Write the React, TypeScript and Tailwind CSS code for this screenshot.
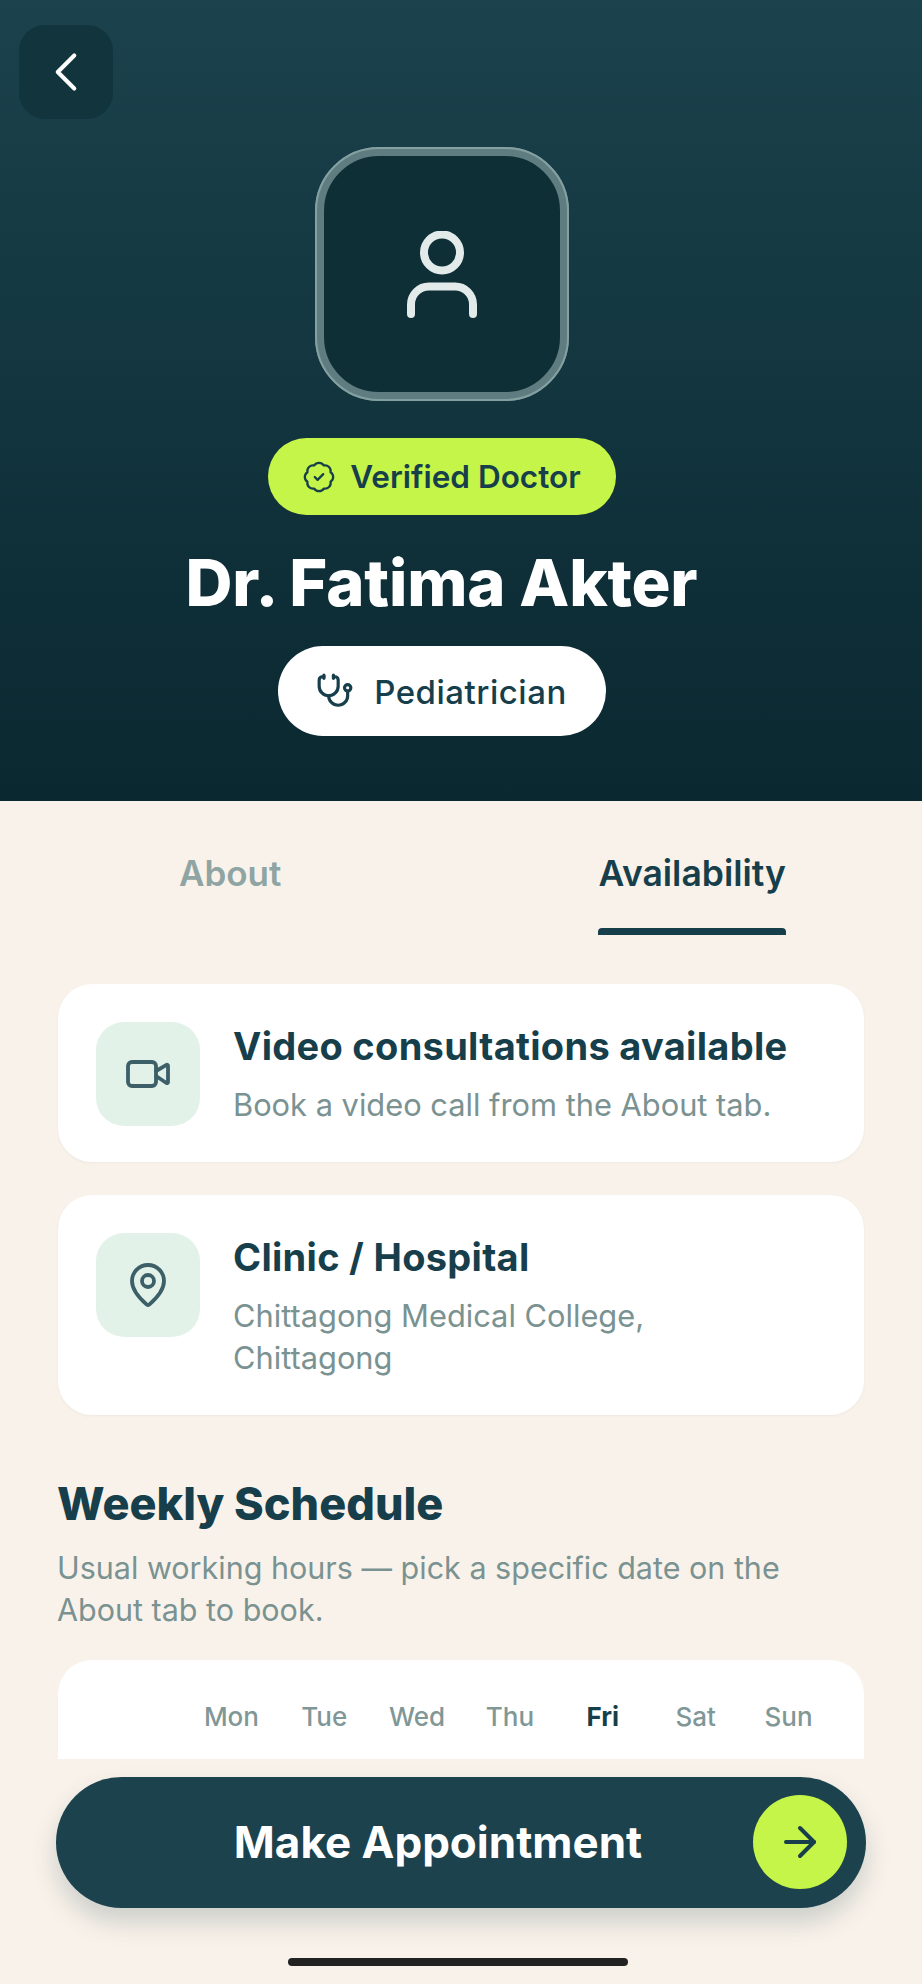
import { ArrowRight, ChevronLeft, MapPin, Stethoscope, Video } from "lucide-react";

const days = ["Mon", "Tue", "Wed", "Thu", "Fri", "Sat", "Sun"];

function VerifiedIcon() {
  return (
    <svg width="34" height="34" viewBox="0 0 24 24" fill="none" stroke="#173f4b" strokeWidth="1.6" strokeLinecap="round" strokeLinejoin="round">
      <path d="M3.85 8.62a4 4 0 0 1 4.78-4.77 4 4 0 0 1 6.74 0 4 4 0 0 1 4.78 4.78 4 4 0 0 1 0 6.74 4 4 0 0 1-4.77 4.78 4 4 0 0 1-6.75 0 4 4 0 0 1-4.78-4.77 4 4 0 0 1 0-6.76Z" />
      <path d="m9 12 2 2 4-4" />
    </svg>
  );
}

function InfoCard({ icon, title, lines }: { icon: React.ReactNode; title: string; lines: string[] }) {
  return (
    <div className="flex min-h-[178px] gap-[33px] rounded-[34px] bg-white px-[38px] pt-[38px] pb-[36px] shadow-[0_1px_3px_rgba(23,63,75,0.05)]">
      <div className="flex h-[104px] w-[104px] shrink-0 items-center justify-center rounded-[28px] bg-[#e2f2e9] text-[#3d5f68]">
        {icon}
      </div>
      <div className="min-w-0">
        <h3 className="text-[38px] leading-[48px] font-bold tracking-[0.3px] whitespace-nowrap text-[#173f4b]">{title}</h3>
        <div className="mt-[14px]">
          {lines.map((line) => (
            <p key={line} className="text-[30.8px] leading-[42px] text-[#7a9291]">
              {line}
            </p>
          ))}
        </div>
      </div>
    </div>
  );
}

export default function App() {
  return (
    <div className="flex h-[1984px] w-[922px] flex-col overflow-hidden bg-[#f9f2ea] font-['Inter',sans-serif]">
      <header className="flex h-[801px] shrink-0 flex-col items-center bg-gradient-to-b from-[#1b424d] to-[#0a2830] pt-[25px] pr-[58px] pl-[19px]">
        <button className="flex h-[94px] w-[94px] items-center justify-center self-start rounded-[26px] bg-[#12343d] text-white">
          <ChevronLeft size={66} strokeWidth={1.5} />
        </button>
        <div className="mt-[28px] flex h-[254px] w-[254px] items-center justify-center rounded-[64px] border-[9px] border-[#5f7d81] bg-[#0f2f37] outline-[2px] -outline-offset-[2px] outline-[#84a0a1]">
          <svg width="70" height="87" viewBox="0 0 70 87" fill="none" stroke="#e3ebea" strokeWidth="8" strokeLinecap="round">
            <circle cx="35" cy="21.5" r="18" />
            <path d="M4 83V73.5a18 18 0 0 1 18-18h26a18 18 0 0 1 18 18V83" />
          </svg>
        </div>
        <div className="mt-[37px] flex h-[77px] w-[348px] items-center justify-center gap-[14px] rounded-full bg-[#c5f549] text-[31.5px] font-semibold text-[#173f4b]">
          <VerifiedIcon />
          <span className="pt-[1px]">Verified Doctor</span>
        </div>
        <h1 className="mt-[30px] text-[65px] leading-[76px] font-extrabold tracking-[-0.2px] whitespace-nowrap text-white">Dr. Fatima Akter</h1>
        <div className="mt-[25px] flex h-[90px] w-[328px] items-center justify-center gap-[20px] rounded-full bg-white text-[33px] font-medium tracking-[0.5px] text-[#173f4b]">
          <Stethoscope size={38} strokeWidth={2} />
          <span className="pt-[4px]">Pediatrician</span>
        </div>
      </header>

      <nav className="flex h-[135px] shrink-0 justify-between pr-[136px] pl-[179px]">
        <div className="pt-[50px] text-[35px] leading-[44px] font-semibold text-[#8fa5a3]">About</div>
        <div className="flex flex-col pt-[51px]">
          <span className="text-[35.5px] leading-[44px] font-semibold text-[#173f4b]">Availability</span>
          <span className="mt-[32px] h-[7px] rounded-t-[4px] bg-[#173f4b]" />
        </div>
      </nav>

      <main className="h-[823px] shrink-0 overflow-hidden px-[58px] pt-[48px]">
        <div className="flex flex-col gap-[33px]">
          <InfoCard
            icon={<Video size={48} strokeWidth={1.9} />}
            title="Video consultations available"
            lines={["Book a video call from the About tab."]}
          />
          <InfoCard
            icon={<MapPin size={48} strokeWidth={1.9} />}
            title="Clinic / Hospital"
            lines={["Chittagong Medical College,", "Chittagong"]}
          />
        </div>
        <h2 className="mt-[63px] -ml-[1px] text-[45px] leading-[52px] font-extrabold text-[#173f4b]">Weekly Schedule</h2>
        <p className="mt-[17px] -ml-[1px] text-[30.5px] leading-[42px] text-[#7a9291]">
          Usual working hours — pick a specific date on the
          <br />
          About tab to book.
        </p>
        <div className="mt-[29px] h-[200px] rounded-[34px] bg-white pt-[39px] pr-[29px] pl-[127px]">
          <div className="grid grid-cols-7">
            {days.map((day) => (
              <span
                key={day}
                className={
                  day === "Fri"
                    ? "text-center text-[26px] leading-[36px] font-bold text-[#173f4b]"
                    : "text-center text-[26px] leading-[36px] font-medium text-[#7f9796]"
                }
              >
                {day}
              </span>
            ))}
          </div>
        </div>
      </main>

      <footer className="relative flex-1 px-[56px] pt-[18px]">
        <button className="relative flex h-[131px] w-[810px] items-center justify-center rounded-full bg-[#1b424d] pr-[46px] pb-[2px] text-[44px] font-bold text-white shadow-[0_14px_26px_rgba(23,63,75,0.2)]">
          Make Appointment
          <span className="absolute top-[18px] right-[19px] flex h-[94px] w-[94px] items-center justify-center rounded-full bg-[#c5f549] text-[#173f4b]">
            <ArrowRight size={48} strokeWidth={2} />
          </span>
        </button>
        <div className="absolute top-[199px] left-[288px] h-[8px] w-[340px] rounded-full bg-[#222]" />
      </footer>
    </div>
  );
}
